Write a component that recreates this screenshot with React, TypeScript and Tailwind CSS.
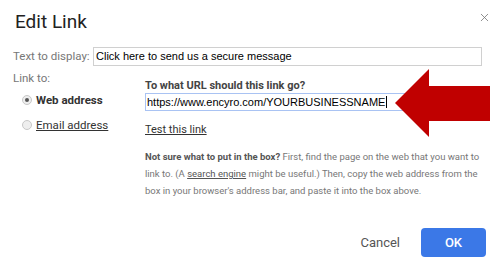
import { X } from "lucide-react";

function Radio({ checked }: { checked?: boolean }) {
  return (
    <span className="flex h-[10px] w-[10px] items-center justify-center rounded-full border border-[#c8c8c8] bg-[#eeeeee]">
      {checked && <span className="h-[4px] w-[4px] rounded-full bg-[#555]" />}
    </span>
  );
}

export default function App() {
  return (
    <div className="relative h-[267px] w-[500px] overflow-hidden bg-white font-['Roboto',sans-serif] text-[#222]">
      {/* Header */}
      <div className="flex items-start justify-between pl-[15px] pr-[9px] pt-[10px]">
        <h1 className="text-[19px] leading-[24px] text-[#222]">Edit Link</h1>
        <X className="mt-[1px] h-[13px] w-[13px] text-[#777]" strokeWidth={1.5} />
      </div>

      {/* Text to display */}
      <div className="mt-[13px] flex items-center pl-[13px] pr-[18px]">
        <span className="w-[80px] shrink-0 whitespace-nowrap text-[11.5px] text-[#777]">Text to display:</span>
        <div className="flex h-[19px] flex-1 items-center border border-[#d0d0d0] pl-[2px] font-['Liberation_Sans',Arial,sans-serif] text-[11px] text-black">
          Click here to send us a secure message
        </div>
      </div>

      {/* Body */}
      <div className="mt-[4px] flex pl-[13px] pr-[18px]">
        <div className="w-[132px] shrink-0">
          <div className="text-[11.5px] leading-[16px] text-[#777]">Link to:</div>
          <div className="mt-[6px] flex items-center gap-[4px] pl-[9px] text-[11.5px] leading-[16px]">
            <Radio checked />
            <span className="font-bold text-[#333]">Web address</span>
          </div>
          <div className="mt-[9px] flex items-center gap-[4px] pl-[9px] text-[11.5px] leading-[16px]">
            <Radio />
            <span className="text-[#333] underline">Email address</span>
          </div>
        </div>

        <div className="min-w-0 flex-1 pt-[9px]">
          <div className="text-[11px] font-bold leading-[14px] text-[#444]">
            To what URL should this link go?
          </div>
          <div className="flex h-[18px] w-[270px] items-center border border-[#a9c3f3] pl-[1px] font-['Liberation_Sans',Arial,sans-serif] text-[11px] text-black">
            https://www.encyro.com/YOURBUSINESSNAME
            <span className="ml-[1px] h-[12px] w-px bg-black" />
          </div>
          <div className="mt-[11px] text-[11px] leading-[16px] text-[#333] underline">
            Test this link
          </div>
          <div className="mt-[10px] text-[9.5px] leading-[17px] text-[#777]">
            <div className="whitespace-nowrap">
              <span className="font-bold text-[#555]">Not sure what to put in the box?</span> First, find the page on
              the web that you want to
            </div>
            <div className="whitespace-nowrap">
              link to. (A <span className="text-[#555] underline">search engine</span> might be useful.) Then, copy the
              web address from the
            </div>
            <div className="whitespace-nowrap">
              box in your browser's address bar, and paste it into the box above.
            </div>
          </div>
        </div>
      </div>

      {/* Footer */}
      <div className="mt-[29px] flex items-center justify-end pr-[14px]">
        <button className="mr-[21px] text-[13px] text-[#555]">Cancel</button>
        <button className="h-[29px] w-[65px] rounded-[4px] bg-[#3b78e7] text-[13px] font-medium text-white">
          OK
        </button>
      </div>

      {/* Red arrow overlay */}
      <svg className="absolute left-0 top-0" width="500" height="267" viewBox="0 0 500 267">
        <polygon
          points="395,103 429,69 429,86 490,86 490,121 429,121 429,137"
          fill="#c00000"
        />
      </svg>
    </div>
  );
}
